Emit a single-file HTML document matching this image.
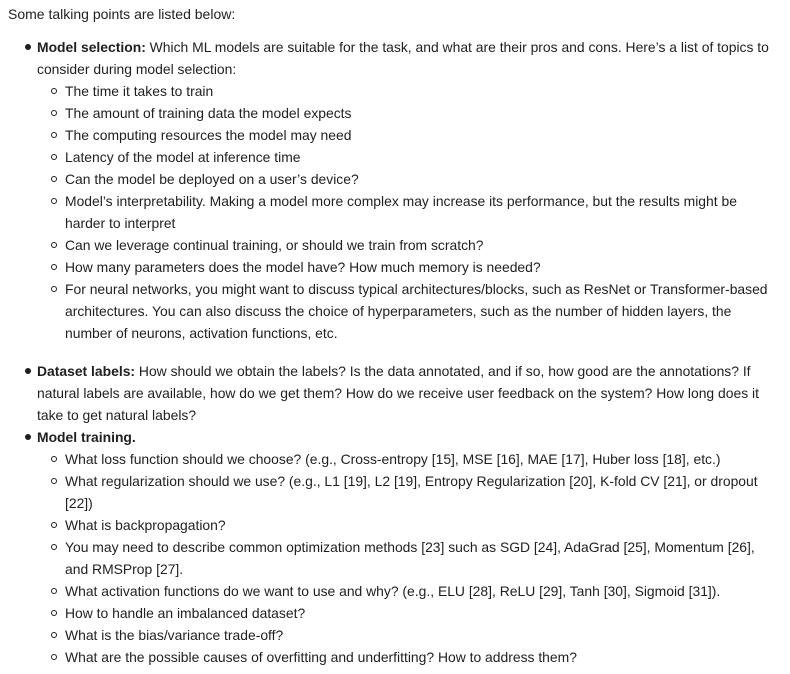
<!DOCTYPE html>
<html><head><meta charset="utf-8"><style>
html,body{margin:0;padding:0;background:#fff;width:790px;height:674px;overflow:hidden}
body{font-family:"Liberation Sans","DejaVu Sans",sans-serif;color:#1f1f1f;font-size:13.9px;position:relative}
.l{position:absolute;white-space:nowrap;line-height:22px;height:22px}
.a{left:37px}.b{left:65px}
.d1::before{content:"";position:absolute;left:-12px;top:8px;width:6px;height:6px;border-radius:50%;background:#1f1f1f}
.d2::before{content:"";position:absolute;left:-14px;top:8px;width:4px;height:4px;border-radius:50%;border:1px solid #1f1f1f}
b{font-weight:bold}
</style></head><body>
<div class="l" style="left:8px;top:3px;font-size:14px">Some talking points are listed below:</div>
<div class="l a d1" style="top:36px"><b>Model selection:</b> Which ML models are suitable for the task, and what are their pros and cons. Here’s a list of topics to</div>
<div class="l a" style="top:58px">consider during model selection:</div>
<div class="l b d2" style="top:80px">The time it takes to train</div>
<div class="l b d2" style="top:102px">The amount of training data the model expects</div>
<div class="l b d2" style="top:124px">The computing resources the model may need</div>
<div class="l b d2" style="top:146px">Latency of the model at inference time</div>
<div class="l b d2" style="top:168px">Can the model be deployed on a user’s device?</div>
<div class="l b d2" style="top:190px">Model’s interpretability. Making a model more complex may increase its performance, but the results might be</div>
<div class="l b" style="top:212px">harder to interpret</div>
<div class="l b d2" style="top:234px">Can we leverage continual training, or should we train from scratch?</div>
<div class="l b d2" style="top:256px">How many parameters does the model have? How much memory is needed?</div>
<div class="l b d2" style="top:278px">For neural networks, you might want to discuss typical architectures/blocks, such as ResNet or Transformer-based</div>
<div class="l b" style="top:300px">architectures. You can also discuss the choice of hyperparameters, such as the number of hidden layers, the</div>
<div class="l b" style="top:322px">number of neurons, activation functions, etc.</div>
<div class="l a d1" style="top:360px"><b>Dataset labels:</b> How should we obtain the labels? Is the data annotated, and if so, how good are the annotations? If</div>
<div class="l a" style="top:382px">natural labels are available, how do we get them? How do we receive user feedback on the system? How long does it</div>
<div class="l a" style="top:404px">take to get natural labels?</div>
<div class="l a d1" style="top:426px"><b>Model training.</b></div>
<div class="l b d2" style="top:448px">What loss function should we choose? (e.g., Cross-entropy [15], MSE [16], MAE [17], Huber loss [18], etc.)</div>
<div class="l b d2" style="top:470px">What regularization should we use? (e.g., L1 [19], L2 [19], Entropy Regularization [20], K-fold CV [21], or dropout</div>
<div class="l b" style="top:492px">[22])</div>
<div class="l b d2" style="top:514px">What is backpropagation?</div>
<div class="l b d2" style="top:536px">You may need to describe common optimization methods [23] such as SGD [24], AdaGrad [25], Momentum [26],</div>
<div class="l b" style="top:558px">and RMSProp [27].</div>
<div class="l b d2" style="top:580px">What activation functions do we want to use and why? (e.g., ELU [28], ReLU [29], Tanh [30], Sigmoid [31]).</div>
<div class="l b d2" style="top:602px">How to handle an imbalanced dataset?</div>
<div class="l b d2" style="top:624px">What is the bias/variance trade-off?</div>
<div class="l b d2" style="top:646px">What are the possible causes of overfitting and underfitting? How to address them?</div>
</body></html>
